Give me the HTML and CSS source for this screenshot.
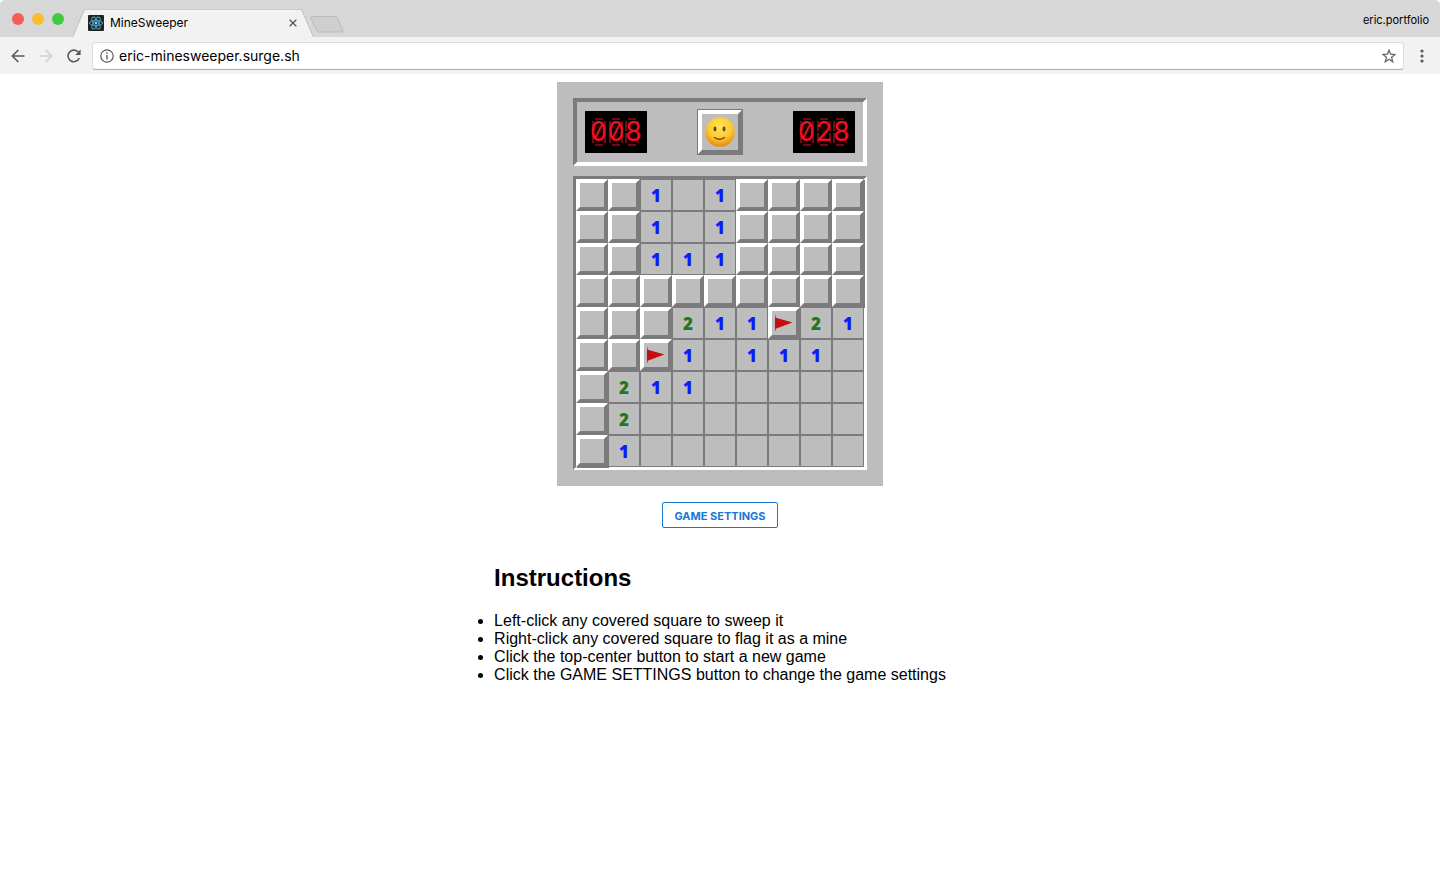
FILE: index.html
```html
<!DOCTYPE html>
<html lang="en">
<head>
<meta charset="utf-8">
<title>MineSweeper</title>
<link rel="stylesheet" href="styles.css">
</head>
<body>
<header class="browser">
  <div class="tab-strip">
    <div class="lights">
      <button class="light close" aria-label="Close window"></button>
      <button class="light minimize" aria-label="Minimize window"></button>
      <button class="light expand" aria-label="Expand window"></button>
    </div>
    <div class="tab">
      <svg class="slant" width="14" height="28" viewBox="0 0 14 28"><path d="M0 28 12 1Q12.500 0 14 0V28Z" fill="#f2f2f2"/><path d="M0.500 28 12 1.500Q12.500.5 14 .5" fill="none" stroke="#bbb"/></svg>
      <div class="tab-body">
        <svg width="16" height="16" viewBox="0 0 16 16"><rect width="16" height="16" rx="1" fill="#222"/><g fill="none" stroke="#4ba3c7" stroke-width="1"><ellipse cx="8" cy="8" rx="6.600" ry="2.600"/><ellipse cx="8" cy="8" rx="6.600" ry="2.600" transform="rotate(60 8 8)"/><ellipse cx="8" cy="8" rx="6.600" ry="2.600" transform="rotate(120 8 8)"/></g><circle cx="8" cy="8" r="1.400" fill="#61dafb"/></svg>
        <span class="tab-title">MineSweeper</span>
        <button class="plain" aria-label="Close tab"><svg width="8" height="8" viewBox="0 0 8 8"><path d="M.7.7l6.600 6.600M7.300.7L.7 7.300" stroke="#555" stroke-width="1.300"/></svg></button>
      </div>
      <svg class="slant" width="14" height="28" viewBox="0 0 14 28"><path d="M14 28 2 1Q1.500 0 0 0V28Z" fill="#f2f2f2"/><path d="M13.500 28 2 1.500Q1.500.5 0 .5" fill="none" stroke="#bbb"/></svg>
    </div>
    <button class="plain new-tab" aria-label="New tab"><svg width="34" height="17" viewBox="0 0 34 17"><path d="M1.500.5H25Q26.500.5 27 1.500L33 14.500Q33.500 16 32 16H9Q7.500 16 7 15L.8 2Q.3.5 1.500.5Z" fill="#cfcfcf" stroke="#bababa"/></svg></button>
    <span class="profile">eric.portfolio</span>
  </div>
  <div class="toolbar">
    <button class="plain" aria-label="Back"><svg width="14" height="14" viewBox="0 0 14 14"><path d="M13.500 7H1.500M7.300 1 1.300 7l6 6" fill="none" stroke="#5a5a5a" stroke-width="1.600"/></svg></button>
    <button class="plain" aria-label="Forward"><svg width="14" height="14" viewBox="0 0 14 14"><path d="M.5 7h12M6.700 1l6 6-6 6" fill="none" stroke="#d0d0d0" stroke-width="1.600"/></svg></button>
    <button class="plain" aria-label="Reload"><svg width="14" height="14" viewBox="0 0 14 14"><path d="M12.300 9A5.800 5.800 0 1 1 11 2.800L12.500 4.500" fill="none" stroke="#5a5a5a" stroke-width="1.600"/><path d="M13.600.5V6H8.200Z" fill="#5a5a5a"/></svg></button>
    <div class="address">
      <svg width="14" height="14" viewBox="0 0 14 14"><circle cx="7" cy="7" r="6.200" fill="none" stroke="#5a5a5a" stroke-width="1.200"/><path d="M7 6v4.500M7 3.300v1.500" stroke="#5a5a5a" stroke-width="1.400"/></svg>
      <input class="url" type="text" aria-label="Address" value="eric-minesweeper.surge.sh">
      <button class="plain" aria-label="Bookmark"><svg width="14" height="14" viewBox="0 0 14 14"><path d="M7 1.200 8.600 5.200 13.100 5.500 9.600 8.300 10.800 12.800 7 10.300 3.200 12.800 4.400 8.300.9 5.500 5.400 5.200Z" fill="none" stroke="#666" stroke-width="1.300"/></svg></button>
    </div>
    <button class="plain menu" aria-label="Menu"><svg width="4" height="14" viewBox="0 0 4 14"><g fill="#5a5a5a"><circle cx="2" cy="2" r="1.600"/><circle cx="2" cy="7" r="1.600"/><circle cx="2" cy="12" r="1.600"/></g></svg></button>
  </div>
</header>
<main class="page">
  <section class="game" aria-label="Minesweeper">
    <div class="panel">
      <div class="lcd">
        <svg class="unlit" width="62" height="42" viewBox="0 0 62 42" aria-hidden="true"><defs><g id="segments" fill="none" stroke="#6e0a12"><path d="M3 1H11M3 27H11M1 3V13M1 15V25M13 3V13M13 15V25" stroke-width="2"/><path d="M3 14H11M7 3V25M3 3 11 25M11 3 3 25" stroke="#3c0509"/></g></defs><use href="#segments" x="7" y="7"/><use href="#segments" x="24" y="7"/><use href="#segments" x="40" y="7"/></svg>
        <output class="count" aria-label="Mines left">008</output>
      </div>
      <button class="face" aria-label="New game"><svg width="32" height="32" viewBox="0 0 32 32"><defs><radialGradient id="skin" cx="50%" cy="32%" r="68%"><stop offset="0" stop-color="#ffe75a"/><stop offset=".6" stop-color="#fdc832"/><stop offset="1" stop-color="#e8870c"/></radialGradient></defs><circle cx="16" cy="16" r="14.700" fill="url(#skin)"/><ellipse cx="11" cy="13" rx="1.500" ry="2.400" fill="#76430b"/><ellipse cx="20" cy="13" rx="1.500" ry="2.400" fill="#76430b"/><path d="M10.500 21.500Q15.500 25 20.500 21.500" fill="none" stroke="#76430b" stroke-width="1.300" stroke-linecap="round"/></svg></button>
      <div class="lcd">
        <svg class="unlit" width="62" height="42" viewBox="0 0 62 42" aria-hidden="true"><use href="#segments" x="7" y="7"/><use href="#segments" x="24" y="7"/><use href="#segments" x="40" y="7"/></svg>
        <output class="count" aria-label="Seconds">028</output>
      </div>
    </div>
    <div class="board" id="board"></div>
  </section>
  <button class="settings">GAME SETTINGS</button>
  <section class="help">
    <h2>Instructions</h2>
    <ul>
      <li>Left-click any covered square to sweep it</li>
      <li>Right-click any covered square to flag it as a mine</li>
      <li>Click the top-center button to start a new game</li>
      <li>Click the GAME SETTINGS button to change the game settings</li>
    </ul>
  </section>
</main>
<script src="game.js"></script>
</body>
</html>
```
FILE: styles.css
```css
* { box-sizing: border-box; }
body { margin: 0; background: #fff; color: #000; font-family: "Liberation Sans", Arial, sans-serif; font-size: 16px; line-height: 18px; }
button { font-family: inherit; padding: 0; }
svg { display: block; }
.plain { background: none; border: 0; }

.browser { font-family: Inter, sans-serif; }
.tab-strip { display: flex; align-items: flex-end; height: 37px; background: #d7d7d7; padding: 0 11px 0 12px; border-radius: 5px 5px 0 0; }
.lights { display: flex; gap: 8px; height: 100%; padding-top: 13px; width: 60px; }
.light { width: 12px; height: 12px; border: 0; border-radius: 50%; }
.close { background: #f45e56; }
.minimize { background: #fbbd2c; }
.expand { background: #3fca3f; }
.tab { display: flex; height: 28px; }
.tab-body { display: flex; align-items: center; width: 214px; padding: 0 3px 1px 2px; background: #f2f2f2; border-top: 1px solid #ccc; }
.tab-title { flex: 1; padding-left: 6px; font-size: 12px; }
.new-tab { margin: 0 0 4px -4px; }
.profile { margin: 0 0 8px auto; font-size: 11px; }
.toolbar { display: flex; align-items: center; gap: 14px; height: 37px; padding: 0 16px 0 11px; background: #f2f2f2; }
.address { display: flex; align-items: center; flex: 1; height: 28px; margin-left: -3px; padding: 0 7px; background: #fff; border: 1px solid #ddd; border-bottom-color: #aaa; border-radius: 4px; }
.url { flex: 1; min-width: 0; border: 0; outline: 0; padding: 0 5px; font-family: inherit; font-size: 14px; color: #000; background: none; }
.menu { margin-left: 2px; }

.page { display: flex; flex-direction: column; align-items: center; padding: 8px; }
.game { padding: 16px; background: #bdbdbd; }
.panel { display: flex; align-items: center; justify-content: space-between; height: 68px; padding: 0 8px; margin-bottom: 10px; border: 4px solid; border-color: #7b7b7b #fff #fff #7b7b7b; }
.lcd { position: relative; width: 62px; height: 42px; background: #000; text-align: center; }
.unlit { position: absolute; inset: 0; }
.count { position: relative; color: #f01020; font-family: Inter, sans-serif; font-size: 27px; line-height: 42px; font-variant-numeric: tabular-nums slashed-zero; }
.face { display: grid; place-items: center; width: 44px; height: 44px; border: 4px solid; border-color: #fff #7b7b7b #7b7b7b #fff; background: #bdbdbd; box-shadow: 0 0 0 1px #7b7b7b; }
.board { display: grid; grid-template-columns: repeat(9, 32px); grid-auto-rows: 32px; border: 3px solid; border-color: #7b7b7b #fff #fff #7b7b7b; }
.cell { display: grid; place-items: center; border: 1px solid #7b7b7b; background: #bdbdbd; font-family: "Noto Sans", sans-serif; font-size: 17px; font-weight: 900; line-height: 20px; }
.open { padding-top: 2px; }
.covered { border: 4px solid; border-color: #fff #7b7b7b #7b7b7b #fff; box-shadow: 1px 1px 0 #7b7b7b; }
.n1 { color: #0e1cf5; }
.n2 { color: #217a21; }
.settings { height: 26px; margin-top: 16px; padding: 1px 11px 0; border: 1px solid #1976d2; border-radius: 2px; background: #fff; color: #1976d2; font-family: Inter, sans-serif; font-size: 11px; font-weight: 700; line-height: 16px; }
.help { margin-top: 36px; }
.help h2 { margin: 0 0 20px; font-size: 24px; line-height: 28px; }
.help ul { margin: 0; padding: 0; }
```
FILE: game.js
```js
// "#" covered, "F" flagged, "." empty, digits count neighbouring mines
const rows = [
  "##1.1####",
  "##1.1####",
  "##111####",
  "#########",
  "###211F21",
  "##F1.111.",
  "#211.....",
  "#2.......",
  "#1......."
];
const flag = '<svg width="24" height="24" viewBox="0 0 24 24"><path d="M3.500 4.500V20" stroke="#777"/><path d="M3 6.500 20.500 11.500 3 18Z" fill="#c80d12"/></svg>';
const board = document.getElementById("board");
rows.forEach((row, r) => [...row].forEach((state, c) => {
  const cell = document.createElement("button");
  const covered = state === "#" || state === "F";
  cell.className = covered ? "cell covered" : "cell open";
  cell.setAttribute("aria-label", `Row ${r + 1}, column ${c + 1}`);
  if (state === "F") cell.innerHTML = flag;
  if (/\d/.test(state)) {
    cell.classList.add("n" + state);
    cell.textContent = state;
  }
  board.append(cell);
}));
```
